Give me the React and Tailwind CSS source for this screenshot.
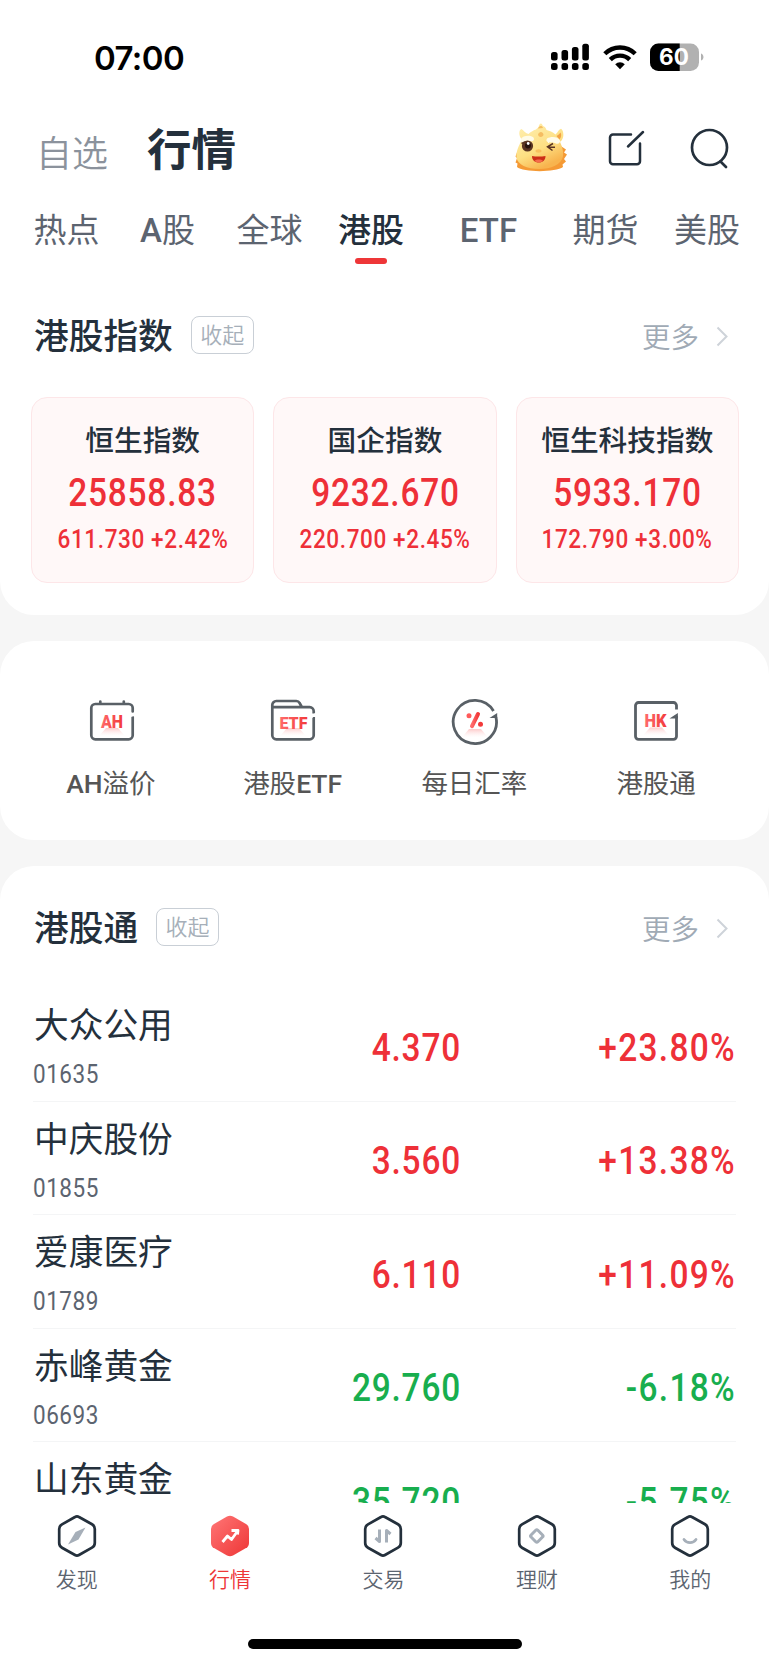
import clsx from "clsx";

const TABS = [
  { label: "热点", width: "w-[101px]" },
  { label: "A股", width: "w-[101px]" },
  { label: "全球", width: "w-[103px]" },
  { label: "港股", width: "w-[100px]", active: true },
  { label: "ETF", width: "w-[135px]" },
  { label: "期货", width: "w-[99px]" },
  { label: "美股", width: "w-[104px]" },
];

const INDICES = [
  { name: "恒生指数", value: "25858.83", change: "611.730 +2.42%" },
  { name: "国企指数", value: "9232.670", change: "220.700 +2.45%" },
  { name: "恒生科技指数", value: "5933.170", change: "172.790 +3.00%" },
];

const SHORTCUTS = [
  { label: "AH溢价", icon: AhIcon },
  { label: "港股ETF", icon: EtfIcon },
  { label: "每日汇率", icon: RateIcon },
  { label: "港股通", icon: HkIcon },
];

const STOCKS = [
  { name: "大众公用", code: "01635", price: "4.370", change: "+23.80%" },
  { name: "中庆股份", code: "01855", price: "3.560", change: "+13.38%" },
  { name: "爱康医疗", code: "01789", price: "6.110", change: "+11.09%" },
  { name: "赤峰黄金", code: "06693", price: "29.760", change: "-6.18%" },
  { name: "山东黄金", code: "", price: "35.720", change: "-5.75%" },
];

const NAV = [
  { label: "发现", glyph: <path d="M32.5 13.5 22.5 18 15 30.500 25.500 25.500Z" fill="#a6afb9" /> },
  { label: "行情", active: true },
  {
    label: "交易",
    glyph: (
      <path d="M20.500 15.500v12l-4-3.500M27.500 28.500V16.500l4 3.500" fill="none" stroke="#a6afb9" strokeWidth="3" strokeLinejoin="round" />
    ),
  },
  {
    label: "理财",
    glyph: (
      <rect x="19" y="17.200" width="9.600" height="9.600" rx="1.500" transform="rotate(45 23.800 22)" fill="none" stroke="#a6afb9" strokeWidth="3" />
    ),
  },
  {
    label: "我的",
    glyph: <path d="M18 25.500c3 4.200 9 4.200 12 0" fill="none" stroke="#a6afb9" strokeWidth="2.800" strokeLinecap="round" />,
  },
];

function StatusIcons() {
  return (
    <div className="flex items-center">
      <svg width="38" height="28" viewBox="0 0 38 28" className="mr-[14px]">
        <rect x="0" y="9" width="6.600" height="8.500" rx="2.500" />
        <rect x="10.500" y="7" width="6.600" height="10.500" rx="2.500" />
        <rect x="20.900" y="4" width="6.600" height="13.500" rx="2.500" />
        <rect x="31.300" y="0.800" width="6.600" height="16.700" rx="2.500" />
        <rect x="0" y="20" width="6.600" height="7" rx="2.500" />
        <rect x="10.500" y="20" width="6.600" height="7" rx="2.500" />
        <rect x="20.900" y="20" width="6.600" height="7" rx="2.500" />
        <rect x="31.300" y="20" width="6.600" height="7" rx="2.500" />
      </svg>
      <svg width="34" height="26" viewBox="0 0 34 26" fill="none" stroke="#000" strokeWidth="4.400" className="mr-[13px]">
        <path d="M1.800 9.800a21.500 21.500 0 0 1 30.400 0" />
        <path d="M7.300 15.600a13.800 13.800 0 0 1 19.400 0" />
        <path d="M17 25.200l-4.800-5a7 7 0 0 1 9.600 0z" fill="#000" stroke="none" />
      </svg>
      <svg width="54" height="28" viewBox="0 0 54 28">
        <defs>
          <clipPath id="battery">
            <rect x="0" y="0.500" width="49" height="27.500" rx="8.500" />
          </clipPath>
        </defs>
        <g clipPath="url(#battery)">
          <rect width="49" height="28" fill="#b1b1b1" />
          <rect width="29.700" height="28" fill="#000" />
        </g>
        <path d="M51 10.500c3.300 1 3.300 6 0 7z" fill="#b1b1b1" />
        <text x="24" y="22.300" textAnchor="middle" fontSize="22.500" fontWeight="700" fill="#fff" className="font-['Inter',sans-serif]">60</text>
      </svg>
    </div>
  );
}

function Mascot() {
  return (
    <svg width="54" height="50" viewBox="0 0 54 50" className="mb-1">
      <defs>
        <linearGradient id="face" x1="0" y1="0" x2="0.500" y2="1">
          <stop offset="0" stopColor="#fff0b4" />
          <stop offset="0.650" stopColor="#fddf82" />
          <stop offset="1" stopColor="#f8b44e" />
        </linearGradient>
      </defs>
      <g transform="translate(0 1.5)">
        <path d="M3 29 1.500 33 3 34.500 1.500 39 3.500 40 3 43.500C9 49 42 49 49 43.500L48.500 41 52 38 50 35.500 53 31 50 29 52 26 46 22Z" fill="#f59a35" />
        <path d="M8 16C4 12 5 6 7.500 5.500c2 1.500 4.500 4.500 7 5 2-2 4.500-3.500 7.500-4.500 1-1.200 1.800-1.500 2.500-2C25 .5 27-.8 28 .8c.6 1 .6 1.800 2 2.200 1 .5 2 1.800 2.500 3.500 3 .8 6 2 9 4.400 2-1.500 3-5 5.500-5.700 2.500 1.500 3 7 1.500 10-.7 1.500-1.500 2.500-2.500 3C49 25 49.500 29 49 33c-1.500 8-12 12.500-24 12.500S3.500 41 2.500 34C1.800 28 5 22 8 16Z" fill="url(#face)" />
        <path d="M46.500 9c1.200 2 .8 5-1 7l-3-3.500c1.700-.8 3-2 4-3.500Z" fill="#f4a244" />
        <path d="M24 5c1-3 4-3.500 5-.5M24 11c1-3.500 5-3.500 5.500 0 0 2.500-4.500 4-5.500 0Z" fill="#f5bd62" />
        <path d="M7 15.500c2-4 10-4 12.500-1.500 1.500 3-.8 3.800-3 3.800-3-.3-5 .3-7 1.700-2 .6-3-1.500-2.500-4ZM46 17c-2-4-9-4.500-13-2-1.500 2.500 0 3.800 3 4 3.200 0 5 .4 6.500 1.200 2.500.6 3.800-1.500 3.500-3.200Z" fill="#fffbe8" />
        <circle cx="13.500" cy="22.500" r="5.600" fill="#5a3422" />
        <circle cx="14" cy="22" r="3" fill="#27120d" />
        <circle cx="14.200" cy="20" r="1.400" fill="#fff" />
        <path d="M7.500 20 11 18.500" stroke="#5a3422" strokeWidth="1.600" />
        <path d="m39 20-5.500 3.300 5 3.700M35 23.500l6 .3" fill="none" stroke="#5a3422" strokeWidth="1.500" />
        <ellipse cx="24.500" cy="27.500" rx="3" ry="1.700" fill="#f9c15e" />
        <path d="M18 32.500c4 .7 9 .7 13.500 0 0 4-2.500 6.500-6.700 6.500S18 36.500 18 32.500Z" fill="#cc2d17" />
        <path d="M20.500 37.300c2-1.800 6.500-1.800 8.500 0-2.300 2-6.200 2-8.500 0Z" fill="#f66b4c" />
      </g>
    </svg>
  );
}

/* Soft red glow under the letters of the shortcut icons */
function IconDefs({ id }) {
  return (
    <defs>
      <linearGradient id={`${id}-text`} x1="0" y1="0" x2="1" y2="0">
        <stop offset="0" stopColor="#ff6b6b" />
        <stop offset="1" stopColor="#f23a3a" />
      </linearGradient>
      <linearGradient id={`${id}-glow`} x1="0" y1="0" x2="0" y2="1">
        <stop offset="0" stopColor="#fdc9c9" />
        <stop offset="1" stopColor="#fff" stopOpacity="0.300" />
      </linearGradient>
    </defs>
  );
}

function AhIcon() {
  return (
    <svg width="48" height="48" viewBox="0 0 48 48" fill="none">
      <IconDefs id="ah" />
      <path d="M18 31h12l7 8H11z" fill="url(#ah-glow)" />
      <path d="M44.700 14.500V11a4 4 0 0 0-4-4H7.300a4 4 0 0 0-4 4v27.300a4 4 0 0 0 4 4h33.400a4 4 0 0 0 4-4V20M12.300 7V4.500M35.800 7V4.500" stroke="#596066" strokeWidth="2.700" strokeLinecap="round" />
      <path d="m40.500 20.500 6-4v2.500z" fill="#fff" />
      <text x="24" y="31" textAnchor="middle" fontSize="18" fontWeight="900" textLength="22" lengthAdjust="spacingAndGlyphs" fill="url(#ah-text)" className="font-['Roboto',sans-serif]">AH</text>
    </svg>
  );
}

function EtfIcon() {
  return (
    <svg width="48" height="48" viewBox="0 0 48 48" fill="none" className="-ml-0.5">
      <IconDefs id="etf" />
      <path d="M18 31h12l7 8H11z" fill="url(#etf-glow)" />
      <path d="M3.300 10.200h37.400a4 4 0 0 1 4 4v2.300M44.700 20v18.300a4 4 0 0 1-4 4H7.300a4 4 0 0 1-4-4V8a4 4 0 0 1 4-4h20a4 4 0 0 1 3.300 2l2.200 4" stroke="#596066" strokeWidth="2.700" />
      <path d="m41.500 22.500 5-4.500v-2.500l-2 2z" fill="#fff" />
      <text x="24.500" y="31.500" textAnchor="middle" fontSize="17" fontWeight="900" textLength="28" lengthAdjust="spacingAndGlyphs" fill="url(#etf-text)" className="font-['Roboto',sans-serif]">ETF</text>
    </svg>
  );
}

function RateIcon() {
  return (
    <svg width="48" height="48" viewBox="0 0 48 48" fill="none">
      <IconDefs id="rate" />
      <path d="M18 32h12l7 8.500H11z" fill="url(#rate-glow)" />
      <path d="M42.500 14A21.600 21.600 0 1 0 44.900 20" stroke="#596066" strokeWidth="2.800" />
      <path d="M38.500 21 46.200 16v5z" fill="#596066" />
      <circle cx="18" cy="18.700" r="2.500" fill="#ff5a5a" />
      <circle cx="29.500" cy="27.300" r="2.500" fill="#f23a3a" />
      <path d="m27 17-6 12.200" stroke="url(#rate-text)" strokeWidth="4" strokeLinecap="round" />
    </svg>
  );
}

function HkIcon() {
  return (
    <svg width="48" height="48" viewBox="0 0 48 48" fill="none" className="-ml-0.5">
      <IconDefs id="hk" />
      <path d="M18 30.500h12l7 8H11z" fill="url(#hk-glow)" />
      <path d="M44.500 12.500V8.500a3 3 0 0 0-3-3H6.500a3 3 0 0 0-3 3v30.800a3 3 0 0 0 3 3h35a3 3 0 0 0 3-3V19" stroke="#596066" strokeWidth="2.800" />
      <path d="M37.500 21.500 45.900 16v5.500z" fill="#596066" />
      <text x="23.500" y="30" textAnchor="middle" fontSize="17.500" fontWeight="900" textLength="22" lengthAdjust="spacingAndGlyphs" fill="url(#hk-text)" className="font-['Roboto',sans-serif]">HK</text>
    </svg>
  );
}

function NavIcon({ active, glyph }) {
  if (active) {
    return (
      <svg width="48" height="44" viewBox="0 0 48 44">
        <defs>
          <linearGradient id="nav-active" x1="0" y1="0" x2="1" y2="1">
            <stop offset="0" stopColor="#ff7676" />
            <stop offset="1" stopColor="#ee3636" />
          </linearGradient>
        </defs>
        <path d="m27 2.600 13 7.300q3 1.700 3 5.100v14q0 3.400-3 5.100l-13 7.300q-3 1.600-6 0L8 34.100q-3-1.700-3-5.100V15q0-3.400 3-5.100L21 2.600q3-1.600 6 0Z" fill="url(#nav-active)" />
        <path d="m16.500 28 5-6 4 3.500 6.500-9M25.500 16.500H32l-.5 4" fill="none" stroke="#fff" strokeWidth="2.800" strokeLinejoin="round" />
      </svg>
    );
  }
  return (
    <svg width="48" height="44" viewBox="0 0 48 44">
      <path d="m26 3 13 7.300q2.800 1.600 2.800 4.700v14q0 3.100-2.800 4.700L26 41q-2 1.200-4 0L9 33.700q-2.800-1.600-2.800-4.700V15q0-3.100 2.800-4.700L22 3q2-1.200 4 0Z" fill="none" stroke="#24303c" strokeWidth="2.700" />
      {glyph}
    </svg>
  );
}

/* Latin letters are set one weight heavier than the Chinese around them */
function MixedLabel({ text }) {
  return text.split(/([A-Z]+)/).filter(Boolean).map((part) => (
    <span key={part} className={clsx(/[A-Z]/.test(part) && "font-medium")}>{part}</span>
  ));
}

function SectionHeader({ title }) {
  return (
    <div className="flex h-[38px] items-center pl-[34px] pr-[40px]">
      <h2 className="pt-[5px] text-[34.700px] font-medium leading-none text-[#24303c]">{title}</h2>
      <button className="ml-[18px] flex h-[38px] w-[63px] items-center justify-center rounded-lg border border-[#c9cfd6] pt-0.5 text-[22px] font-[350] leading-none text-[#a6afb9]">
        收起
      </button>
      <div className="ml-auto flex items-center pt-[3px] text-[28.500px] leading-none font-[350] text-[#a0aab5]">
        <span className="pt-[5px]">更多</span>
        <svg width="13" height="21" viewBox="0 0 13 21" fill="none" className="ml-[17px]">
          <path d="m1.500 1.500 9 9-9 9" stroke="#ced3d9" strokeWidth="2" />
        </svg>
      </div>
    </div>
  );
}

export default function App() {
  return (
    <div className="flex h-[1665px] w-[769px] flex-col overflow-hidden bg-[#f6f6f6] font-['Roboto','Noto_Sans_CJK_SC',sans-serif] text-[#24303c]">
      <section className="h-[615px] shrink-0 rounded-b-[34px] bg-white">
        {/* Status bar */}
        <div className="flex h-[114px] items-center justify-between pl-[94px] pr-[65px]">
          <span className="pt-0.5 font-['Inter',sans-serif] text-[33px] font-semibold leading-none tracking-[-0.600px] text-black">07:00</span>
          <StatusIcons />
        </div>

        {/* Page title */}
        <div className="flex h-[74px] items-center pl-[36px] pr-[38px]">
          <span className="pt-[7px] text-[36px] font-[350] leading-none text-[#8b929c]">自选</span>
          <h1 className="ml-[39px] text-[44.500px] font-bold leading-none">行情</h1>
          <div className="ml-auto flex items-center pb-1">
            <Mascot />
            <svg width="38" height="38" viewBox="0 0 38 38" fill="none" stroke="#24303c" strokeWidth="2.500" strokeLinecap="round" className="mb-0.5 ml-[39px]">
              <path d="M24 5.500H6a3 3 0 0 0-3 3v23.700a3 3 0 0 0 3 3h24a3 3 0 0 0 3-3V14.500M21 17.500 36 3" />
            </svg>
            <svg width="42" height="42" viewBox="0 0 42 42" fill="none" stroke="#24303c" strokeWidth="2.700" strokeLinecap="round" className="ml-[44px]">
              <circle cx="20.500" cy="19.500" r="17.500" />
              <path d="m31.500 33.500 5.500 5.500" />
            </svg>
          </div>
        </div>

        {/* Market tabs */}
        <div className="flex h-[84px] pl-4">
          {TABS.map((tab) => (
            <div key={tab.label} className={clsx("flex shrink-0 flex-col items-center pt-[26px]", tab.width)}>
              <span className={clsx("text-[33px] leading-[34px]", tab.active ? "font-medium" : "text-[#5c6470]")}>
                <MixedLabel text={tab.label} />
              </span>
              {tab.active && <span className="mt-[10px] h-1.5 w-8 rounded-full bg-[#ee3638]" />}
            </div>
          ))}
        </div>

        <div className="pt-[44px]">
          <SectionHeader title="港股指数" />
        </div>
        <div className="mt-[43px] grid grid-cols-3 gap-[19px] pl-[31px] pr-[30px]">
          {INDICES.map((item) => (
            <div key={item.name} className="flex h-[186px] flex-col items-center rounded-2xl border border-[#fde6e8] bg-[#fff8f8]">
              <span className="mt-[28px] text-[28.700px] font-medium leading-[30px]">{item.name}</span>
              <span className="mt-[19px] scale-x-[0.88] text-[38px] font-medium leading-[36px] tracking-[0.900px] text-[#ee3038]">{item.value}</span>
              <span className="mt-[14px] scale-x-[0.9] whitespace-pre text-[25px] font-medium leading-[30px] tracking-[0.700px] text-[#ee3038]">{item.change}</span>
            </div>
          ))}
        </div>
      </section>

      <section className="mt-[26px] grid h-[199px] shrink-0 grid-cols-4 rounded-[34px] bg-white px-[21px]">
        {SHORTCUTS.map(({ label, icon: Icon }) => (
          <div key={label} className="flex flex-col items-center pt-[56px]">
            <Icon />
            <span className="mt-[24.500px] -ml-0.5 text-[26.500px] leading-[28px] text-[#555]">
              <MixedLabel text={label} />
            </span>
          </div>
        ))}
      </section>

      <section className="mt-[26px] min-h-0 flex-1 overflow-hidden rounded-t-[34px] bg-white pt-[42px]">
        <SectionHeader title="港股通" />
        <div className="mt-[42px] px-[33px]">
          {STOCKS.map((stock) => (
            <div key={stock.name} className="flex h-[113.500px] items-center border-b border-[#f4f5f6]">
              <div className="flex w-[200px] flex-col pt-2">
                <span className="pl-px text-[34.700px] leading-[36px]">{stock.name}</span>
                <span className="mt-[18px] h-[26px] origin-left scale-x-[0.9] text-[25px] leading-[26px] tracking-[0.600px] text-[#5c6470]">{stock.code}</span>
              </div>
              <span className={clsx("w-[228px] origin-right scale-x-[0.88] pt-[7px] text-right text-[38px] font-medium leading-none tracking-[0.900px]", stock.change[0] === "+" ? "text-[#ee3038]" : "text-[#18ae4e]")}>
                {stock.price}
              </span>
              <span className={clsx("flex-1 origin-right scale-x-[0.88] pt-[7px] text-right text-[38px] font-medium leading-none tracking-[1.500px]", stock.change[0] === "+" ? "text-[#ee3038]" : "text-[#18ae4e]")}>
                {stock.change}
              </span>
            </div>
          ))}
        </div>
      </section>

      {/* Bottom navigation */}
      <nav className="flex h-[162px] shrink-0 flex-col items-center bg-white">
        <div className="grid h-[136px] w-full grid-cols-5 pr-0.5 pt-[11px]">
          {NAV.map((item) => (
            <div key={item.label} className={clsx("flex flex-col items-center text-[21px] leading-[24px]", item.active ? "text-[#ee3638]" : "text-[#5c6470]")}>
              <NavIcon active={item.active} glyph={item.glyph} />
              <span className="mt-[10px] font-[350]">{item.label}</span>
            </div>
          ))}
        </div>
        <div className="h-2.5 w-[274px] rounded-full bg-black" />
      </nav>
    </div>
  );
}
